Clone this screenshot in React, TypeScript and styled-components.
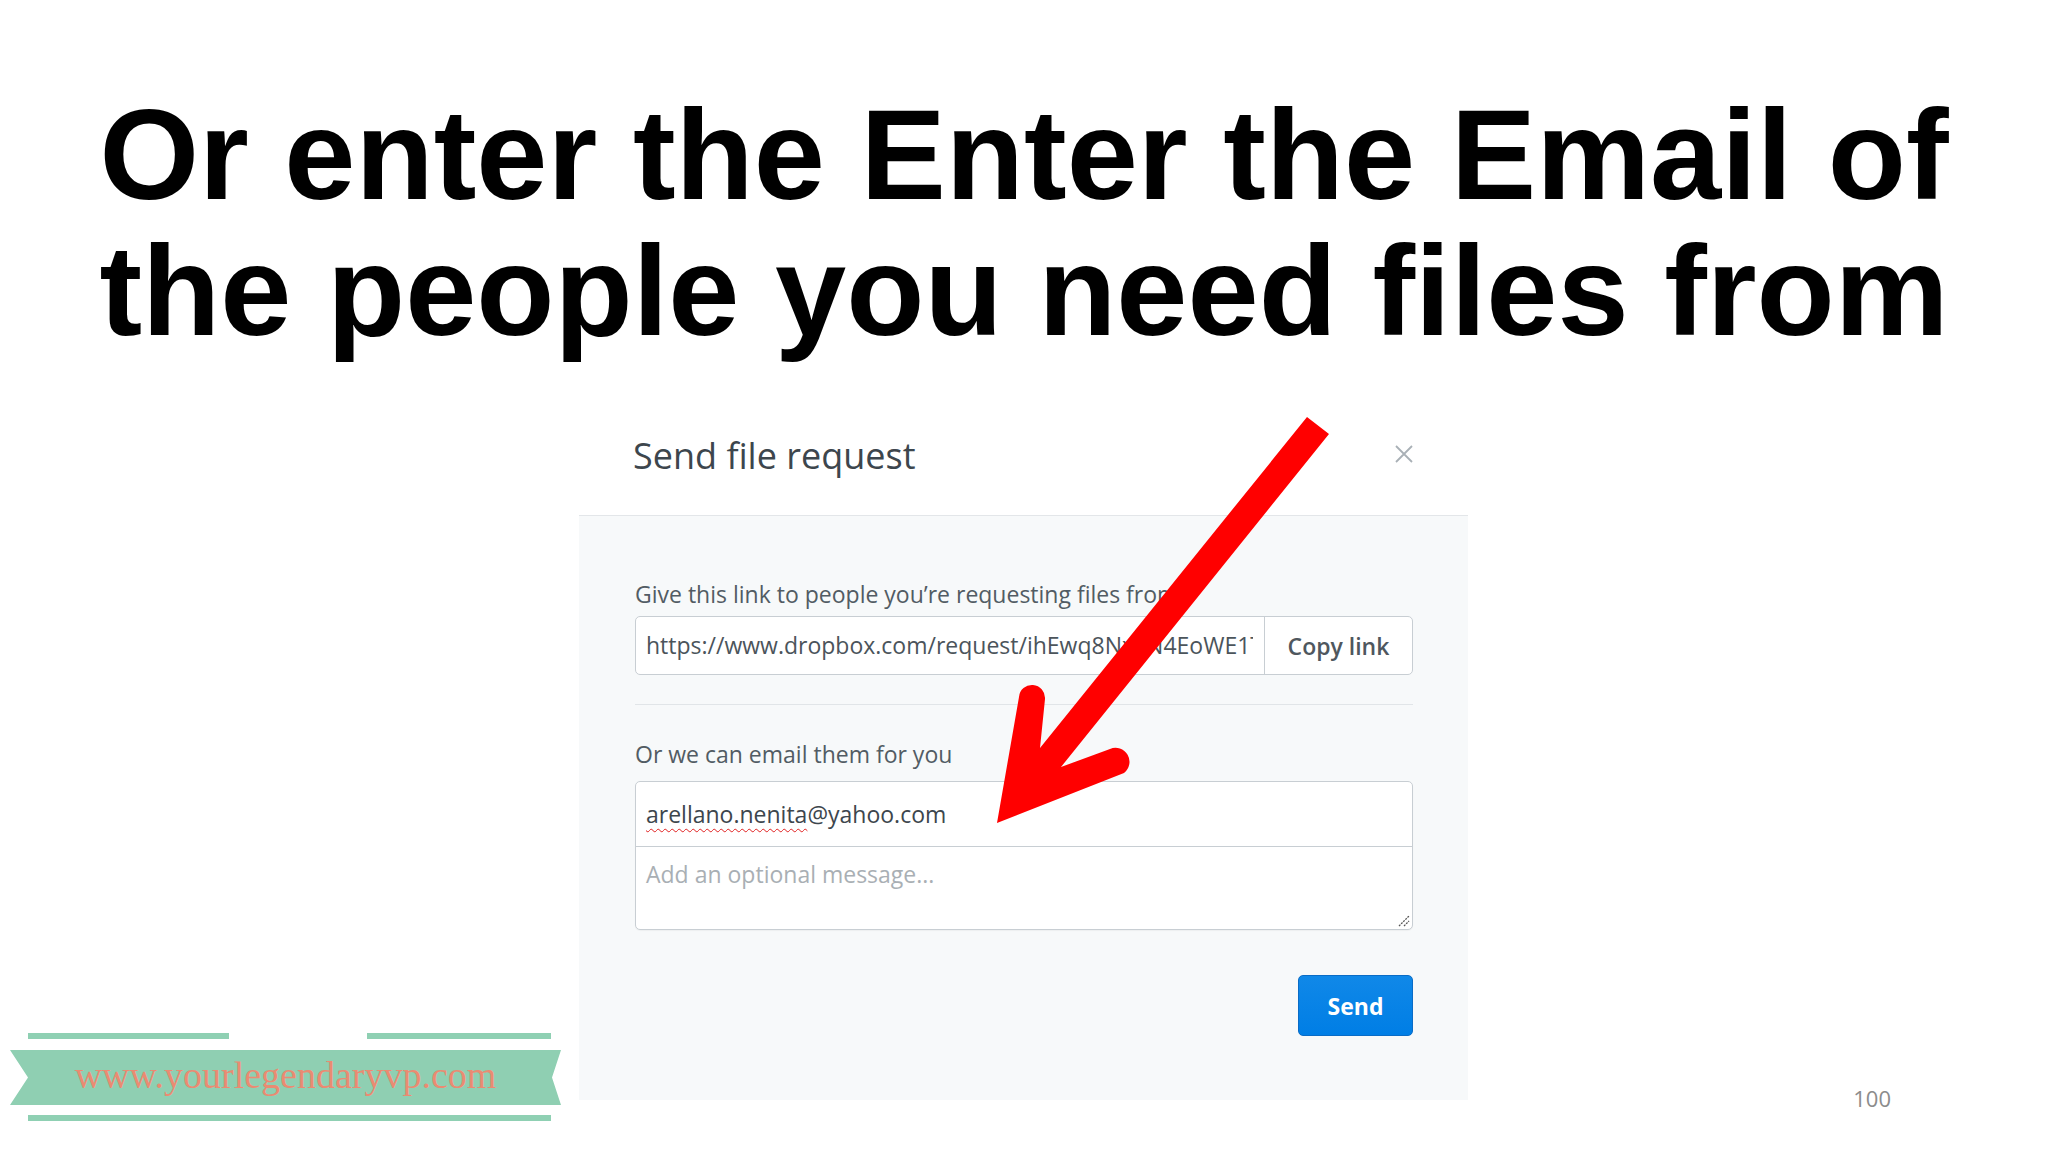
import styled, { createGlobalStyle } from 'styled-components';

const GlobalStyle = createGlobalStyle`
  html, body {
    margin: 0;
    padding: 0;
    background: #ffffff;
  }
  body {
    width: 2048px;
    height: 1152px;
    overflow: hidden;
  }
`;

const Slide = styled.div`
  position: relative;
  width: 2048px;
  height: 1152px;
  padding-top: 87px;
  box-sizing: border-box;
  background: #ffffff;
  overflow: hidden;
`;

const Title = styled.h1`
  margin: 0;
  font-family: 'Liberation Sans', Arial, sans-serif;
  font-weight: 700;
  font-size: 128px;
  line-height: 136px;
  text-align: center;
  color: #000000;
`;

const Stage = styled.div`
  display: grid;
  grid-template-columns: 579px 889px 1fr;
  margin-top: 38px;
`;

const LeftColumn = styled.div`
  display: flex;
  flex-direction: column;
  justify-content: flex-end;
  padding-left: 10px;
`;

const RightColumn = styled.div`
  display: flex;
  align-items: flex-end;
  justify-content: flex-end;
  padding: 0 157px 8px 0;
`;

const PageNumber = styled.span`
  font-family: 'Open Sans', sans-serif;
  font-size: 22px;
  line-height: 30px;
  color: #8c8c8c;
`;

/* dialog */

const Dialog = styled.div`
  display: flex;
  flex-direction: column;
  margin-bottom: 21px;
  font-family: 'Open Sans', sans-serif;
`;

const DialogHeader = styled.div`
  display: flex;
  align-items: center;
  justify-content: space-between;
  height: 118px;
  padding: 0 53px 0 54px;
  border-bottom: 1px solid #e3e6e9;
  background: #ffffff;
`;

const DialogTitle = styled.span`
  font-size: 36px;
  line-height: 52px;
  color: #3d464d;
`;

const CloseButton = styled.span`
  display: flex;
  width: 22px;
  height: 22px;
  margin-top: -4px;
  align-items: center;
  justify-content: center;
`;

const DialogBody = styled.div`
  display: flex;
  flex-direction: column;
  padding: 62px 55px 64px 56px;
  background: #f7f9fa;
`;

const Label = styled.div<{ $gap: number }>`
  font-size: 23px;
  line-height: 32px;
  color: #525c64;
  margin-bottom: ${(p) => p.$gap}px;
`;

const LinkField = styled.div`
  display: flex;
  height: 57px;
  border: 1px solid #c8ced3;
  border-radius: 5px;
  background: #ffffff;
  overflow: hidden;
`;

const LinkText = styled.div`
  flex: 1;
  min-width: 0;
  margin: 0 11px 0 10px;
  font-size: 23px;
  line-height: 57px;
  color: #4b545b;
  white-space: nowrap;
  overflow: hidden;
`;

const CopyButton = styled.div`
  display: flex;
  width: 147px;
  align-items: center;
  justify-content: center;
  border-left: 1px solid #c8ced3;
  font-size: 23px;
  font-weight: 600;
  color: #4f575e;
`;

const Divider = styled.div`
  height: 1px;
  margin: 29px 0 33px;
  background: #e1e5e8;
`;

const EmailBox = styled.div`
  display: flex;
  flex-direction: column;
  border: 1px solid #c8ced3;
  border-radius: 5px;
  background: #ffffff;
  box-shadow: 0 1px 1px rgba(0, 0, 0, 0.04);
`;

const EmailRow = styled.div`
  height: 64px;
  padding: 0 10px;
  font-size: 23px;
  line-height: 64px;
  color: #3d464d;
  border-bottom: 1px solid #c8ced3;
`;

const Misspelled = styled.span`
  text-decoration: underline wavy #e02020;
  text-decoration-thickness: 1px;
  text-underline-offset: 5px;
`;

const MessageArea = styled.div`
  position: relative;
  height: 71px;
  padding: 11px 10px 0;
  font-size: 23px;
  line-height: 32px;
  color: #a9afb4;
`;

const Grip = styled.svg`
  position: absolute;
  right: 2px;
  bottom: 2px;
`;

const Actions = styled.div`
  display: flex;
  justify-content: flex-end;
  margin-top: 45px;
`;

const SendButton = styled.div`
  display: flex;
  width: 113px;
  height: 59px;
  align-items: center;
  justify-content: center;
  border: 1px solid #0a6cc6;
  border-radius: 5px;
  background: linear-gradient(#1088e8, #007ee5);
  color: #ffffff;
  font-size: 23px;
  font-weight: 700;
`;

/* watermark ribbon */

const Ribbon = styled.div`
  display: flex;
  flex-direction: column;
  width: 551px;
`;

const LineRow = styled.div`
  display: flex;
  justify-content: space-between;
  padding: 0 10px 0 18px;
`;

const MintLine = styled.div<{ $w: number }>`
  width: ${(p) => p.$w}px;
  height: 6px;
  background: #8fd0b3;
`;

const Banner = styled.div`
  display: flex;
  height: 55px;
  margin: 11px 0 10px;
  align-items: center;
  justify-content: center;
  background: #8fcfb2;
  clip-path: polygon(0 0, 100% 0, calc(100% - 9px) 50%, 100% 100%, 0 100%, 18px 50%);
  font-family: 'Liberation Serif', 'Times New Roman', serif;
  font-size: 38px;
  line-height: 55px;
  padding-bottom: 4px;
  box-sizing: border-box;
  color: #ea8b72;
`;

const ArrowLayer = styled.svg`
  position: absolute;
  left: 0;
  top: 0;
  pointer-events: none;
`;

export default function App() {
  return (
    <>
      <GlobalStyle />
      <Slide>
        <Title>
          Or enter the Enter the Email of
          <br />
          the people you need files from
        </Title>
        <Stage>
          <LeftColumn>
            <Ribbon>
              <LineRow>
                <MintLine $w={201} />
                <MintLine $w={184} />
              </LineRow>
              <Banner>www.yourlegendaryvp.com</Banner>
              <LineRow>
                <MintLine $w={523} />
              </LineRow>
            </Ribbon>
          </LeftColumn>
          <Dialog>
            <DialogHeader>
              <DialogTitle>Send file request</DialogTitle>
              <CloseButton>
                <svg width="20" height="20" viewBox="0 0 20 20">
                  <path d="M2 2 L18 18 M18 2 L2 18" stroke="#a9b0b6" strokeWidth="1.8" fill="none" />
                </svg>
              </CloseButton>
            </DialogHeader>
            <DialogBody>
              <Label $gap={6}>Give this link to people you’re requesting files from</Label>
              <LinkField>
                <LinkText>https://www.dropbox.com/request/ihEwq8NxkN4EoWE1Tq</LinkText>
                <CopyButton>Copy link</CopyButton>
              </LinkField>
              <Divider />
              <Label $gap={11}>Or we can email them for you</Label>
              <EmailBox>
                <EmailRow>
                  <Misspelled>arellano.nenita</Misspelled>@yahoo.com
                </EmailRow>
                <MessageArea>
                  Add an optional message...
                  <Grip width="14" height="14" viewBox="0 0 14 14">
                    <path d="M3 13 L13 3 M8 13 L13 8" stroke="#555" strokeWidth="1.3" strokeDasharray="2 1" fill="none" />
                  </Grip>
                </MessageArea>
              </EmailBox>
              <Actions>
                <SendButton>Send</SendButton>
              </Actions>
            </DialogBody>
          </Dialog>
          <RightColumn>
            <PageNumber>100</PageNumber>
          </RightColumn>
        </Stage>
        <ArrowLayer width="2048" height="1152" viewBox="0 0 2048 1152">
          <path
            d="M997 823 L1019 697 A13 13 0 0 1 1045 699 L1040 748 L1307 417 L1329 434 L1061 767 L1110 749 A14 14 0 0 1 1124 773 Z"
            fill="#ff0000"
          />
        </ArrowLayer>
      </Slide>
    </>
  );
}
